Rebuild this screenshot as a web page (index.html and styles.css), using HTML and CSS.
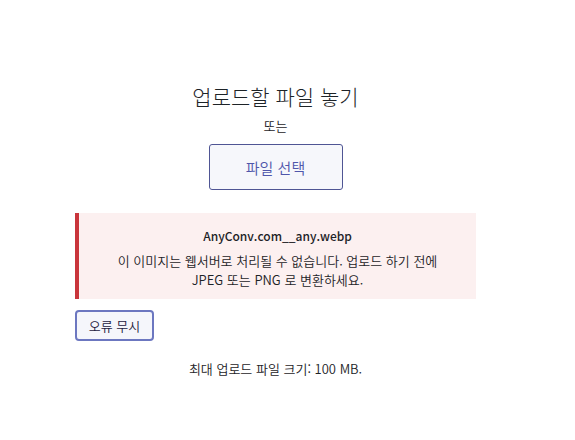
FILE: index.html
```html
<!doctype html>
<html lang="ko">
<head>
    <meta charset="UTF-8">
    <title>파일 업로드</title>
    <link rel="stylesheet" href="styles.css">
</head>
<body>
    <div class="uploader">
        <div class="drop-area">
            <h2 class="drop-title">업로드할 파일 놓기</h2>
            <p class="drop-or">또는</p>
            <button class="select-button">파일 선택</button>
        </div>

        <div class="notice notice-error">
            <p class="notice-file">AnyConv.com__any.webp</p>
            <p class="notice-text">이 이미지는 웹서버로 처리될 수 없습니다. 업로드 하기 전에 JPEG 또는 PNG 로 변환하세요.</p>
        </div>

        <button class="dismiss-button">오류 무시</button>

        <p class="max-size">최대 업로드 파일 크기: 100 MB.</p>
    </div>
</body>
</html>
```

FILE: styles.css
```css
body {
    margin: 0;
    background-color: #ffffff;
    font-family: 'Noto Sans CJK KR', 'Noto Sans', sans-serif;
    color: #2c3338;
}
.uploader {
    width: 401px;
    margin-left: 75px;
    padding-top: 82px;
}
.drop-area {
    text-align: center;
}
.drop-title {
    margin: 0;
    font-size: 21px;
    font-weight: 300;
    line-height: 28px;
    color: #1d2327;
}
.drop-or {
    margin: 6px 0 0;
    font-size: 13px;
    font-weight: 350;
    line-height: 20px;
    color: #1d2327;
}
.select-button {
    margin-top: 8px;
    width: 134px;
    height: 46px;
    border: 1px solid #4f5594;
    border-radius: 3px;
    background-color: #f6f7fb;
    color: #4f56aa;
    font-family: inherit;
    font-size: 15px;
    font-weight: 350;
}
.notice {
    margin-top: 23px;
    padding: 13px 28px 10px;
    text-align: center;
}
.notice-error {
    border-left: 4px solid #c9353b;
    background-color: #fcf0f0;
}
.notice-file {
    margin: 0;
    font-size: 12px;
    font-weight: 500;
    line-height: 20px;
    color: #1d2327;
}
.notice-text {
    margin: 5px 0 0;
    font-size: 13px;
    font-weight: 350;
    line-height: 19px;
    color: #1d2327;
}
.dismiss-button {
    margin-top: 11px;
    width: 79px;
    height: 31px;
    border: 2px solid #6c77c0;
    border-radius: 4px;
    background-color: #f5f6fb;
    color: #1d2040;
    font-family: inherit;
    font-size: 13px;
    font-weight: 350;
}
.max-size {
    margin: 18px 0 0;
    text-align: center;
    font-size: 13px;
    font-weight: 350;
    line-height: 20px;
    color: #1d2327;
}
```
